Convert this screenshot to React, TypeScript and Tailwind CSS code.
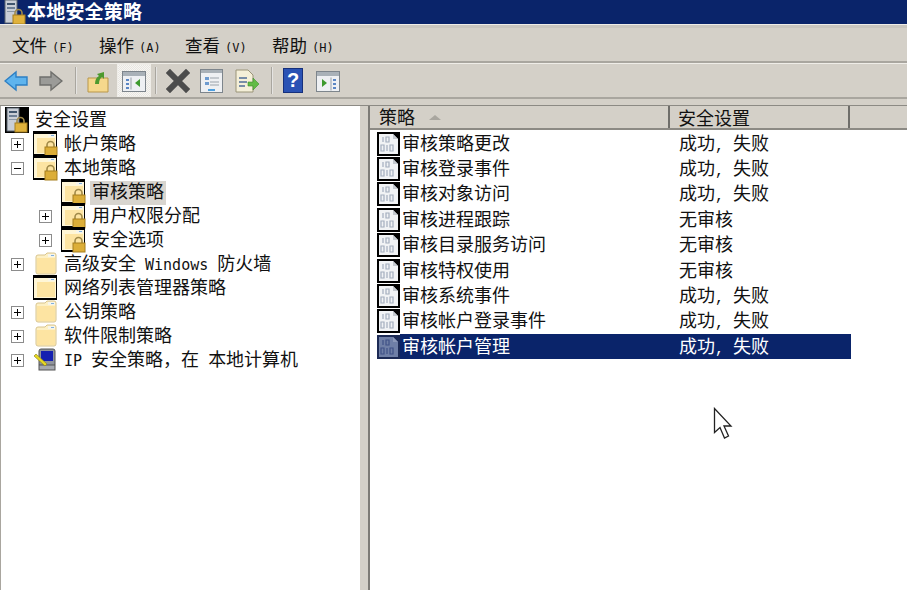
import type { ReactNode } from "react";

const FONT = "font-['Liberation_Mono','Noto_Sans_CJK_SC',monospace]";

function ServerLockIcon({ dark = false }: { dark?: boolean }) {
  return (
    <svg width="24" height="26" viewBox="0 0 24 26" className="shrink-0">
      {dark && <rect x="0" y="0" width="24" height="26" fill="#000" />}
      <rect x="2" y="1" width="12" height="23" fill="#c9ced6" stroke="#5c6670" />
      <rect x="4" y="4" width="8" height="2" fill="#40566e" />
      <rect x="4" y="8" width="8" height="2" fill="#6e8096" />
      <rect x="4" y="12" width="8" height="1" fill="#8a97a5" />
      <path d="M12 17v-3a3.500 3.500 0 0 1 7 0v3" fill="none" stroke="#a08a4a" strokeWidth="1.6" />
      <rect x="10" y="16" width="12" height="9" fill="#e0b23c" stroke="#a67f1e" />
    </svg>
  );
}

function FolderIcon({ lock = false, dark = false }: { lock?: boolean; dark?: boolean }) {
  return (
    <svg width="25" height="26" viewBox="0 0 25 26" className="shrink-0">
      {dark && <path d="M0 0h24v25H0z" fill="#000" />}
      {dark ? (
        <path d="M1 3h22v20H1z" fill="#fff6d6" />
      ) : (
        <path d="M3 6q0-2 2-2h7l2-2h7q2 0 2 2v17q0 2-2 2H5q-2 0-2-2z" fill="#fdf0c4" stroke="#d8c48e" />
      )}
      <path d="M15 3h7v3h-7z" fill="#f7f5ea" />
      <path d="M18 4h3v1h-3z" fill="#7fb0e0" />
      <path d="M4 7h18v15H4z" fill="#fde4a2" />
      {lock && (
        <g>
          <path d="M14 17v-3a3.500 3.500 0 0 1 7 0v3" fill="none" stroke="#a08a4a" strokeWidth="1.6" />
          <rect x="12" y="16" width="12" height="9" fill="#dcae38" stroke="#a67f1e" />
        </g>
      )}
    </svg>
  );
}

function IpIcon() {
  return (
    <svg width="25" height="24" viewBox="0 0 25 24" className="shrink-0">
      <rect x="6" y="1" width="16" height="17" rx="2" fill="#8f949c" stroke="#555" />
      <rect x="8" y="3" width="12" height="10" fill="#1420b0" />
      <rect x="6" y="17" width="16" height="5" fill="#a5a9b0" stroke="#555" />
      <path d="M1 8l2-2 11 10-2 2z" fill="#e6d824" stroke="#8a7c10" strokeWidth=".6" />
    </svg>
  );
}

function BinaryIcon({ selected = false }: { selected?: boolean }) {
  const paper = selected ? "#6f7fa6" : "#f1f3f5";
  const ink = selected ? "#3f5186" : "#a3aebe";
  return (
    <svg width="23" height="24" viewBox="0 0 23 24" className="shrink-0">
      <rect width="23" height="24" fill={selected ? "#1c2a55" : "#000"} />
      <path d="M2 2h14l5 5v15H2z" fill={paper} />
      <path d="M16 2v5h5z" fill={selected ? "#8b98b8" : "#c4c9cf"} />
      <path d="M6 5v5M9 5h3v5H9zM4 13h3v6H4zM10 13v6M13 13h3v6h-3z" fill="none" stroke={ink} strokeWidth="1.2" />
    </svg>
  );
}

function Expander({ kind }: { kind?: "plus" | "minus" }) {
  if (!kind) return <span className="w-[13px] h-[13px] shrink-0" />;
  return (
    <span className="relative w-[13px] h-[13px] shrink-0 border border-[#8c8c8c] bg-white">
      <span className="absolute left-[2px] top-[5px] w-[7px] h-px bg-black" />
      {kind === "plus" && <span className="absolute left-[5px] top-[2px] w-px h-[7px] bg-black" />}
    </span>
  );
}

interface TreeRowProps {
  indent: string;
  expander?: "plus" | "minus";
  icon: ReactNode;
  label: ReactNode;
  active?: boolean;
}

function TreeRow({ indent, expander, icon, label, active }: TreeRowProps) {
  return (
    <div className={`flex items-center h-6 ${indent}`}>
      <Expander kind={expander} />
      <span className="ml-[9px] mr-[4px] flex items-center">{icon}</span>
      <span className={`text-[18px] leading-6 mt-[2px] px-[2px] whitespace-pre ${active ? "bg-[#d8d5cf]" : ""}`}>{label}</span>
    </div>
  );
}

const POLICIES = [
  ["审核策略更改", "成功, 失败"],
  ["审核登录事件", "成功, 失败"],
  ["审核对象访问", "成功, 失败"],
  ["审核进程跟踪", "无审核"],
  ["审核目录服务访问", "无审核"],
  ["审核特权使用", "无审核"],
  ["审核系统事件", "成功, 失败"],
  ["审核帐户登录事件", "成功, 失败"],
  ["审核帐户管理", "成功, 失败"],
];

function ToolSep() {
  return <span className="block w-[2px] h-[27px] bg-[#a9a69f] border-r border-white/70 shrink-0" />;
}

function Latin({ children }: { children: ReactNode }) {
  return <span className="text-[15px] font-['DejaVu_Sans_Mono',monospace]">{children}</span>;
}

function MenuItem({ label, hotkey, width }: { label: string; hotkey: string; width: string }) {
  return (
    <span className={width}>
      {label}
      <span className="text-[12px] ml-[5px] font-['DejaVu_Sans_Mono',monospace]">({hotkey})</span>
    </span>
  );
}

export default function App() {
  return (
    <div className={`w-[907px] h-[590px] overflow-hidden flex flex-col bg-[#d4d0c8] text-[#111] ${FONT}`}>
      <div className="h-6 shrink-0 bg-[#0a246a] flex items-center pl-[3px] text-white font-bold overflow-hidden">
        <ServerLockIcon />
        <span className="text-[19px] leading-6 mt-[4px] tracking-[0.2px]">本地安全策略</span>
      </div>
      <div className="h-[4px] shrink-0 bg-[#c9c6bf] border-t border-[#efede8]" />

      <div className="h-[35px] shrink-0 flex items-center pt-[5px] text-[17.500px] border-b-2 border-[#a9a69f]">
        <span className="ml-[12px]" />
        <MenuItem label="文件" hotkey="F" width="w-[87px]" />
        <MenuItem label="操作" hotkey="A" width="w-[86px]" />
        <MenuItem label="查看" hotkey="V" width="w-[87px]" />
        <MenuItem label="帮助" hotkey="H" width="" />
      </div>

      <div className="h-[36px] shrink-0 flex items-center border-b-2 border-[#a9a69f] border-t border-t-[#efede8]">
        <svg width="25" height="22" viewBox="0 0 25 22" className="ml-[4px] shrink-0">
          <path d="M1 11 12 2v5h11v8H12v5z" fill="#5fb4ee" stroke="#2d7fc4" strokeWidth="1.4" />
        </svg>
        <svg width="25" height="22" viewBox="0 0 25 22" className="ml-[9px] shrink-0">
          <path d="M24 11 13 2v5H2v8h11v5z" fill="#9b9b98" stroke="#6f6f6c" strokeWidth="1.4" />
        </svg>
        <span className="ml-[12px]"><ToolSep /></span>
        <svg width="22" height="24" viewBox="0 0 22 24" className="ml-[10px] shrink-0">
          <path d="M1 9h20v14H1z" fill="#f5d88c" stroke="#b9974a" />
          <path d="M8 15q0-6 4-8l-2-2 7-2v7l-2-2q-3 2-3 7z" fill="#4d9a2e" />
        </svg>
        <span className="ml-[8px] w-[34px] h-[33px] flex items-center justify-center shrink-0 border border-[#efede8] bg-[repeating-conic-gradient(#e8e6e1_0_25%,#f7f6f3_0_50%)] bg-[length:2px_2px]">
          <svg width="24" height="24" viewBox="0 0 24 24">
            <rect x="0.5" y="2.500" width="23" height="20" fill="#eef0f3" stroke="#7d858c" />
            <rect x="1" y="3" width="22" height="4" fill="#a9b1b8" />
            <path d="M4 10h3v2H4zM4 14h3v2H4zM4 18h3v2H4z" fill="#5b86c4" />
            <path d="M9 8.500v12" stroke="#98a0a8" />
            <path d="M18 10v8l-5-4z" fill="#3d9a2e" />
          </svg>
        </span>
        <span className="ml-[4px]"><ToolSep /></span>
        <svg width="24" height="24" viewBox="0 0 24 24" className="ml-[9px] shrink-0">
          <path d="M4 4l16 16M20 4 4 20" stroke="#4c4c4c" strokeWidth="6" strokeLinecap="square" />
        </svg>
        <svg width="23" height="24" viewBox="0 0 23 24" className="ml-[10px] shrink-0">
          <rect x="0.5" y="0.5" width="22" height="23" fill="#eef0f3" stroke="#7d858c" />
          <rect x="1" y="1" width="21" height="3" fill="#a9b1b8" />
          <path d="M5 8h4v3H5zM5 13h4v3H5z" fill="#6e9bcf" />
          <path d="M10 9h9M10 13h9M10 16h9" stroke="#9aa2aa" />
          <path d="M8 20h7v2H8z" fill="#4ea0e0" />
        </svg>
        <svg width="25" height="24" viewBox="0 0 25 24" className="ml-[12px] shrink-0">
          <path d="M1 1h12l5 5v17H1z" fill="#f4efd8" stroke="#9a9478" />
          <path d="M4 9h8M4 13h8M4 17h6" stroke="#4f6e96" strokeWidth="1.500" />
          <path d="M13 13h5V9l6 6-6 6v-4h-5z" fill="#62bb46" stroke="#3d8f2b" strokeWidth=".6" />
        </svg>
        <span className="ml-[11px]"><ToolSep /></span>
        <span className="ml-[10px] w-[20px] h-[25px] shrink-0 bg-[#2a52b4] border border-[#16307c] text-white text-[20px] leading-[23px] font-bold text-center font-['Liberation_Sans',sans-serif]">?</span>
        <svg width="24" height="22" viewBox="0 0 24 22" className="ml-[13px] shrink-0">
          <rect x="0.5" y="1.500" width="23" height="20" fill="#eef0f3" stroke="#7d858c" />
          <rect x="1" y="2" width="22" height="4" fill="#a9b1b8" />
          <path d="M17 9h3v2h-3zM17 13h3v2h-3zM17 17h3v2h-3z" fill="#5b86c4" />
          <path d="M15 7.500v13" stroke="#98a0a8" />
          <path d="M6 9v8l5-4z" fill="#3d9a2e" />
        </svg>
      </div>

      <div className="h-[7px] shrink-0 border-b border-[#8c8a84]" />

      <div className="flex-1 flex min-h-0">
        <div className="w-[360px] bg-white pt-[2px] pl-[1px] border-l border-[#a9a69f] overflow-hidden">
          <div className="flex items-center h-6 pl-[3px]">
            <ServerLockIcon dark />
            <span className="text-[18px] ml-[6px] mt-[2px] leading-6">安全设置</span>
          </div>
          <TreeRow indent="pl-[9px]" expander="plus" icon={<FolderIcon lock dark />} label="帐户策略" />
          <TreeRow indent="pl-[9px]" expander="minus" icon={<FolderIcon lock dark />} label="本地策略" />
          <TreeRow indent="pl-[37px]" icon={<FolderIcon lock dark />} label="审核策略" active />
          <TreeRow indent="pl-[37px]" expander="plus" icon={<FolderIcon lock dark />} label="用户权限分配" />
          <TreeRow indent="pl-[37px]" expander="plus" icon={<FolderIcon lock dark />} label="安全选项" />
          <TreeRow indent="pl-[9px]" expander="plus" icon={<FolderIcon />} label={<>高级安全<Latin> Windows </Latin>防火墙</>} />
          <TreeRow indent="pl-[9px]" icon={<FolderIcon dark />} label="网络列表管理器策略" />
          <TreeRow indent="pl-[9px]" expander="plus" icon={<FolderIcon />} label="公钥策略" />
          <TreeRow indent="pl-[9px]" expander="plus" icon={<FolderIcon />} label="软件限制策略" />
          <TreeRow indent="pl-[9px]" expander="plus" icon={<IpIcon />} label={<><Latin>IP </Latin>安全策略{"\uFF0C"}在<Latin> </Latin>本地计算机</>} />
        </div>

        <div className="w-[10px] bg-[#d4d0c8] border-r-2 border-[#7d7b76]" />

        <div className="flex-1 min-w-0 bg-white">
          <div className="h-[24px] flex bg-[#d4d0c8] border-b-2 border-[#8c8a84] text-[18px] leading-[24px]">
            <div className="w-[300px] pl-[9px] pt-[3px] flex items-center border-r-2 border-[#6f6e6a]">
              策略
              <span className="ml-[14px] mb-[3px] w-0 h-0 border-x-[6px] border-x-transparent border-b-[5px] border-b-[#a9a69f]" />
            </div>
            <div className="w-[180px] pl-[8px] pt-[1px] border-r-2 border-[#6f6e6a]">
              <span className="block mt-[1px]">安全设置</span>
            </div>
          </div>
          <div className="pt-[1px] pl-[7px]">
            {POLICIES.map(([name, setting], i) => {
              const selected = i === POLICIES.length - 1;
              return (
                <div key={name} className="flex items-center h-[25.400px] w-[474px] text-[18px]">
                  <BinaryIcon selected={selected} />
                  <div className={`flex-1 flex h-[25px] items-center pt-[3px] ${selected ? "bg-[#0a246a] text-white" : ""}`}>
                    <span className="w-[279px] pl-[2px]">{name}</span>
                    <span className="whitespace-pre">
                      {setting.includes(",") ? (
                        <>成功<span className="text-[15px]">, </span>失败</>
                      ) : (
                        setting
                      )}
                    </span>
                  </div>
                </div>
              );
            })}
          </div>
          <div className="relative">
            <svg width="20" height="33" viewBox="0 0 20 33" className="absolute left-[343px] top-[47px]">
              <path d="M1.500 1.500v24l5.500-5 4.500 10.500 4-2-4.500-10h7z" fill="#fff" stroke="#222" strokeWidth="1.300" />
            </svg>
          </div>
        </div>
      </div>
    </div>
  );
}
